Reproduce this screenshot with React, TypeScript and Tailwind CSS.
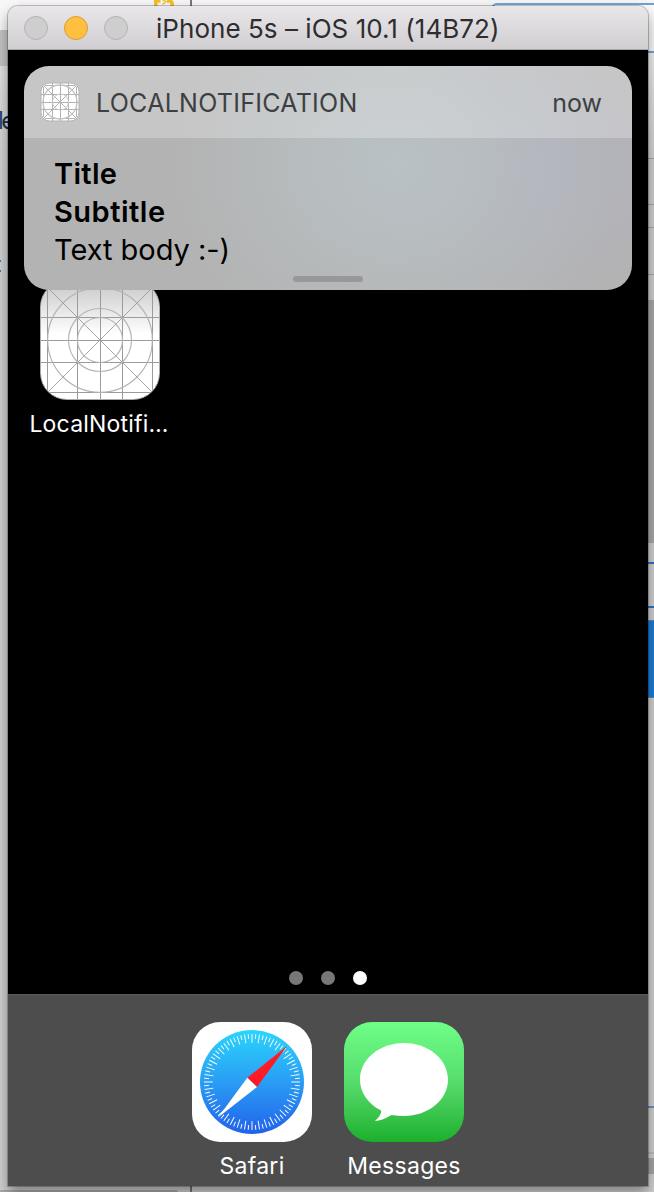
import React from "react";

const FONT = "font-['Inter','Liberation_Sans',sans-serif]";

function TemplateGrid({ className, stroke, width }: { className: string; stroke: string; width: number }) {
  return (
    <svg viewBox="0 0 120 120" className={className} fill="none" stroke={stroke} strokeWidth={width}>
      <path d="M7.5 0V120M37.5 0V120M60.5 0V120M82.5 0V120M112.5 0V120M0 7.5H120M0 37.5H120M0 60.5H120M0 82.5H120M0 112.5H120" />
      <path d="M0 0L120 120M120 0L0 120" strokeWidth={width * 0.9} />
      <g stroke="#b4b4b4" strokeWidth={width * 1.15}>
        <circle cx="60" cy="60" r="52.3" />
        <circle cx="60" cy="60" r="31.5" />
        <circle cx="60" cy="60" r="22.5" />
      </g>
    </svg>
  );
}

function SmallTemplateGrid() {
  return (
    <svg viewBox="0 0 40 40" className="size-10" fill="none" stroke="#b2b2b2" strokeWidth="1">
      <rect x="1" y="1" width="38" height="38" rx="8.500" fill="#fff" />
      <path d="M3.5 5V35M12.500 1V39M20.500 1V39M28.500 1V39M36.500 5V35M5 3.500H35M1 12.500H39M1 20.500H39M1 27.500H39M5 36.500H35" />
      <path d="M4 4L36 36M36 4L4 36" />
      <circle cx="20" cy="20" r="17" strokeWidth="1.300" stroke="#c4c4c4" />
      <circle cx="20.500" cy="20" r="8" stroke="#c8c8c8" />
    </svg>
  );
}

function SafariIcon() {
  const ticks = Array.from({ length: 80 }, (_, i) => i);
  return (
    <svg viewBox="0 0 120 120" className="size-[120px]">
      <defs>
        <linearGradient id="compass" x1="0" y1="0" x2="0" y2="1">
          <stop offset="0" stopColor="#2ad5fc" />
          <stop offset="0.5" stopColor="#2a9df4" />
          <stop offset="1" stopColor="#2162ea" />
        </linearGradient>
      </defs>
      <circle cx="60" cy="60" r="52" fill="url(#compass)" />
      <g stroke="#fff" strokeWidth="0.95">
        {ticks.map((i) => (
          <path key={i} d={i % 2 === 0 ? "M60 12V20.8" : "M60 12V16.8"} transform={`rotate(${i * 4.5} 60 60)`} />
        ))}
      </g>
      <path d="M95 24L55.3 55.8L65 65Z" fill="#ff1b25" />
      <path d="M26 95.5L55.3 55.8L65 65Z" fill="#fff" />
    </svg>
  );
}

function MessagesIcon() {
  return (
    <svg viewBox="0 0 120 120" className="size-[120px]">
      <path
        d="M60 21C35.500 21 16 37.300 16 57.500C16 70.500 24 81.800 36.700 88.300C37.900 89.500 36.600 94.300 31 98.900C37 99 42.500 96 47.500 93.100C51.500 93.700 55.800 94 60 94C84.500 94 104 77.800 104 57.500C104 37.300 84.500 21 60 21Z"
        fill="#fff"
      />
    </svg>
  );
}

function Backdrop() {
  return (
    <div className="absolute inset-0 bg-[#d2d2d2]">
      <div className="absolute left-0 top-0 h-[60px] w-full bg-[#f5f5f5]" />
      <div className="absolute left-0 top-0 flex h-full w-[20px] flex-col bg-[#d0d0d0]">
        <div className="h-[30px] bg-[#f7f7f7]" />
        <div className="h-[36px] bg-[#c5c5c5]" />
        <div className="h-[100px] bg-linear-to-b from-[#e2e2e2] to-[#d0d0d0]" />
      </div>
      <span className={`absolute -left-[2px] top-[106px] text-[24px] leading-[30px] tracking-[-2.5px] text-[#222a3c] ${FONT}`}>
        <span className="text-[#214777]">l</span>e
      </span>
      <div className="absolute left-0 top-[260px] h-[2px] w-[1px] bg-[#397bb8]" />
      <div className="absolute left-0 top-[270px] h-[2px] w-[1px] bg-[#397bb8]" />
      <svg viewBox="0 0 20 12" className="absolute left-[154px] top-0 h-[12px] w-[20px]" fill="none" stroke="#f4bd26" strokeWidth="3.5">
        <path d="M6.500 0.800H0M1.800 6V2M18.200 6V4Q18 1.500 16 1H13" />
        <path d="M8.500 0L12 1.500L8.500 4.500" strokeWidth="1.300" />
      </svg>
      <div className="absolute left-[190px] top-0 h-full w-[2px] bg-[#777]" />
      <div className="absolute left-[491px] top-[3px] h-[50px] w-[200px] rounded-l-[6px] border-2 border-[#6ba3d8] bg-[#fafafa]" />
      <div className="absolute right-0 top-[53px] flex w-[16px] flex-col">
        <div className="h-[105px] bg-linear-to-b from-[#f0f0f0] via-[#dedede] to-[#d2d2d2]" />
        <div className="h-[46px] border-t border-[#a7a7a7] bg-[#d0d0d0]" />
        <div className="h-[23px] border-t border-[#a7a7a7] bg-[#d0d0d0]" />
        <div className="h-[47px] border-t border-[#a7a7a7] bg-[#d0d0d0]" />
        <div className="h-[26px] border-t border-[#a7a7a7] bg-[#d0d0d0]" />
        <div className="h-[243px] bg-[#a9a9a9]" />
        <div className="h-[19px] bg-[#d0d0d0]" />
        <div className="h-[44px] border-t-2 border-[#2a72cc] bg-[#d0d0d0]" />
        <div className="h-[14px] border-t-2 border-[#2a72cc] bg-[#d0d0d0]" />
        <div className="h-[78px] border-y border-[#4b8fce] bg-[#1c7cd5]" />
        <div className="h-[408px] bg-[#d0d0d0]" />
        <div className="h-[46px] border-t-2 border-[#6594c2] bg-[#d0d0d0]" />
        <div className="h-[6px] border-t-2 border-[#bbb] bg-[#d0d0d0]" />
        <div className="h-[16px] bg-[#a6a6a6]" />
        <div className="h-[18px] bg-[#d0d0d0]" />
      </div>
      <div className="absolute bottom-0 left-0 h-[2px] w-[178px] rounded-tr bg-[#aaa]" />
    </div>
  );
}

function TitleBar() {
  return (
    <header className="flex h-[44px] items-center rounded-t-[10px] border-b border-[#aaa8aa] bg-linear-to-b from-[#eae7ea] to-[#d1ced1] pl-4">
      <div className="flex gap-4">
        <div className="size-6 rounded-full border border-[#b3b2b3] bg-[#cfcecf]" />
        <div className="size-6 rounded-full border border-[#df9a34] bg-[#ffbf3f]" />
        <div className="size-6 rounded-full border border-[#b3b2b3] bg-[#cfcecf]" />
      </div>
      <h1 className="ml-[28px] mt-[3px] whitespace-nowrap text-[26px] leading-[30px] tracking-[0.04px] text-[#2e2d30]">
        iPhone 5s – iOS 10.1 (14B72)
      </h1>
    </header>
  );
}

function Notification() {
  return (
    <section className="relative z-10 mx-4 flex h-[224px] flex-col overflow-hidden rounded-[25px] bg-[#b3b3b3] bg-[radial-gradient(ellipse_220px_200px_at_61%_44%,#b9c1c4_0%,rgba(185,193,196,0.6)_45%,rgba(185,193,196,0)_100%),radial-gradient(ellipse_190px_140px_at_84%_46%,#b2b3bd_0%,rgba(178,179,189,0)_100%)]">
      <div className="flex h-[72px] items-center bg-white/25 pl-4 pr-[30px] text-[25px] leading-[30px] text-[#3d4042]">
        <SmallTemplateGrid />
        <span className="ml-[16px] mt-px tracking-[0.27px]">LOCALNOTIFICATION</span>
        <span className="ml-auto mt-px">now</span>
      </div>
      <div className="flex flex-col pl-[30px] pt-[17px] text-[29px] leading-[38px] text-black">
        <strong className="font-semibold tracking-[0.3px]">Title</strong>
        <strong className="font-semibold tracking-[0.5px]">Subtitle</strong>
        <span className="tracking-[-0.03px]">Text body :-)</span>
      </div>
      <div className="mx-auto mb-[8px] mt-auto h-[6px] w-[70px] shrink-0 rounded-full bg-[#989898]" />
    </section>
  );
}

function DockApp({ label, tile, labelClass, children }: { label: string; tile: string; labelClass: string; children: React.ReactNode }) {
  return (
    <div className="flex w-[120px] flex-col items-center">
      <div className={`size-[120px] overflow-hidden rounded-[28px] ${tile}`}>{children}</div>
      <span className={`mt-[9px] whitespace-nowrap text-[23px] leading-[30px] text-white ${labelClass}`}>{label}</span>
    </div>
  );
}

export default function App() {
  return (
    <div className={`relative h-[1192px] w-[654px] overflow-hidden ${FONT}`}>
      <Backdrop />
      <main className="relative ml-2 mt-[6px] flex h-[1180px] w-[640px] flex-col rounded-t-[10px] shadow-[0_0_0_1px_rgba(0,0,0,0.22),0_7px_14px_rgba(0,0,0,0.4)]">
        <TitleBar />
        <div className="flex min-h-0 flex-1 flex-col bg-black pt-4">
          <Notification />
          <div className="-mt-[10px] ml-8 flex w-[120px] flex-col items-center">
            <div className="size-[120px] overflow-hidden rounded-[27px] border border-[#aaa] bg-linear-to-b from-[#c8c8c8] via-white via-45% to-white">
              <TemplateGrid className="-m-px size-[120px]" stroke="#9b9b9b" width={1} />
            </div>
            <span className="mt-[9px] whitespace-nowrap text-[23px] leading-[30px] tracking-[0.2px] text-white -ml-[2px]">LocalNotifi…</span>
          </div>
          <div className="mb-[9px] mt-auto flex justify-center gap-[18px]">
            <div className="size-[14px] rounded-full bg-[#777]" />
            <div className="size-[14px] rounded-full bg-[#777]" />
            <div className="size-[14px] rounded-full bg-white" />
          </div>
          <footer className="flex h-[192px] shrink-0 justify-center gap-8 border-t border-[#5b5b5b] bg-[#4d4d4d] pt-[27px]">
            <DockApp label="Safari" tile="bg-white" labelClass="tracking-[0.3px]">
              <SafariIcon />
            </DockApp>
            <DockApp label="Messages" tile="bg-linear-to-b from-[#6fff87] via-[#56dc6c] to-[#18b02b]" labelClass="tracking-[0.3px]">
              <MessagesIcon />
            </DockApp>
          </footer>
        </div>
      </main>
    </div>
  );
}
